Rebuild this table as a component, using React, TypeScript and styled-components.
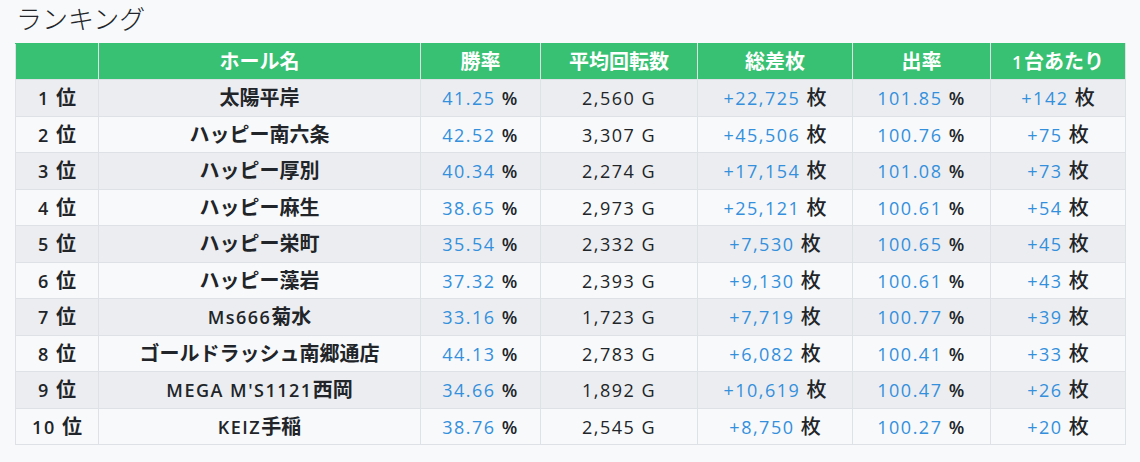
import styled, { createGlobalStyle } from "styled-components";

const GlobalStyle = createGlobalStyle`
    body {
        margin: 0;
        background-color: #f8f9fb;
        font-family: "Noto Sans CJK JP", sans-serif;
        color: #212529;
    }
`;

type Row = {
    hall: string;
    win: string;
    games: string;
    diff: string;
    payout: string;
    perUnit: string;
};

const rows: Row[] = [
    { hall: "太陽平岸", win: "41.25", games: "2,560", diff: "+22,725", payout: "101.85", perUnit: "+142" },
    { hall: "ハッピー南六条", win: "42.52", games: "3,307", diff: "+45,506", payout: "100.76", perUnit: "+75" },
    { hall: "ハッピー厚別", win: "40.34", games: "2,274", diff: "+17,154", payout: "101.08", perUnit: "+73" },
    { hall: "ハッピー麻生", win: "38.65", games: "2,973", diff: "+25,121", payout: "100.61", perUnit: "+54" },
    { hall: "ハッピー栄町", win: "35.54", games: "2,332", diff: "+7,530", payout: "100.65", perUnit: "+45" },
    { hall: "ハッピー藻岩", win: "37.32", games: "2,393", diff: "+9,130", payout: "100.61", perUnit: "+43" },
    { hall: "Ms666菊水", win: "33.16", games: "1,723", diff: "+7,719", payout: "100.77", perUnit: "+39" },
    { hall: "ゴールドラッシュ南郷通店", win: "44.13", games: "2,783", diff: "+6,082", payout: "100.41", perUnit: "+33" },
    { hall: "MEGA M'S1121西岡", win: "34.66", games: "1,892", diff: "+10,619", payout: "100.47", perUnit: "+26" },
    { hall: "KEIZ手稲", win: "38.76", games: "2,545", diff: "+8,750", payout: "100.27", perUnit: "+20" },
];

const columns = [
    { label: "", width: 83 },
    { label: "ホール名", width: 322 },
    { label: "勝率", width: 120 },
    { label: "平均回転数", width: 157 },
    { label: "総差枚", width: 155 },
    { label: "出率", width: 138 },
    { label: "1台あたり", width: 135 },
];

// latin runs get their own (smaller, wider spaced) font, the rest stays CJK
function Mixed({ text }: { text: string }){
    const parts = text.split(/([A-Za-z0-9'.,+% ]+)/).filter(Boolean);
    return (
        <>
            {parts.map((p, i) => /[A-Za-z0-9]/.test(p)
                ? <Latin key={i} $weight="inherit">{p}</Latin>
                : <span key={i}>{p}</span>)}
        </>
    );
}

export default function App(){
    return (
        <Page>
            <GlobalStyle />
            <Title>ランキング</Title>
            <Table>
                <colgroup>
                    {columns.map((c, i) => <col key={i} style={{ width: c.width }} />)}
                </colgroup>
                <thead>
                    <tr>
                        {columns.map((c, i) => <Th key={i}><Mixed text={c.label} /></Th>)}
                    </tr>
                </thead>
                <tbody>
                    {rows.map((r, i) => (
                        <Tr key={i} $striped={i % 2 === 0}>
                            <Td $bold><Mixed text={`${i + 1} 位`} /></Td>
                            <Td $bold><Mixed text={r.hall} /></Td>
                            <Td><Latin $blue>{r.win} </Latin><Latin $weight={600}>%</Latin></Td>
                            <Td><Latin>{r.games} G</Latin></Td>
                            <Td><Latin $blue>{r.diff} </Latin><Unit>枚</Unit></Td>
                            <Td><Latin $blue>{r.payout} </Latin><Latin $weight={600}>%</Latin></Td>
                            <Td><Latin $blue>{r.perUnit} </Latin><Unit>枚</Unit></Td>
                        </Tr>
                    ))}
                </tbody>
            </Table>
        </Page>
    );
};

const Page = styled.div`
    padding: 0 15px;
    width: 1110px;
`;

const Title = styled.h1`
    margin: 0 0 7px 1px;
    font-size: 26px;
    line-height: 36px;
    font-weight: 300;
`;

const Table = styled.table`
    border-collapse: collapse;
    table-layout: fixed;
    width: 1111px;
    font-size: 20px;
`;

const Th = styled.th`
    background-color: #38c172;
    color: #ffffff;
    font-weight: 600;
    text-align: center;
    line-height: 26px;
    height: 36px;
    box-sizing: border-box;
    padding: 3px 4px 4px 4px;
    border: 1px solid #dee2e6;
    border-top-color: #38c172;
`;

const Tr = styled.tr<{ $striped: boolean }>`
    background-color: ${p => p.$striped ? "#ecedf0" : "#f8f9fb"};
`;

const Td = styled.td<{ $bold?: boolean }>`
    text-align: center;
    line-height: 26px;
    height: 36.5px;
    box-sizing: border-box;
    padding: 3px 4px 4px 4px;
    border: 1px solid #dee2e6;
    font-weight: ${p => p.$bold ? 600 : 400};
    white-space: nowrap;
`;

const Latin = styled.span<{ $blue?: boolean; $weight?: number | string }>`
    font-family: "Open Sans", sans-serif;
    font-size: 18px;
    line-height: 18px;
    letter-spacing: 1.5px;
    color: ${p => p.$blue ? "#3490dc" : "inherit"};
    font-weight: ${p => p.$weight ?? 400};
`;

const Unit = styled.span`
    font-weight: 500;
`;
